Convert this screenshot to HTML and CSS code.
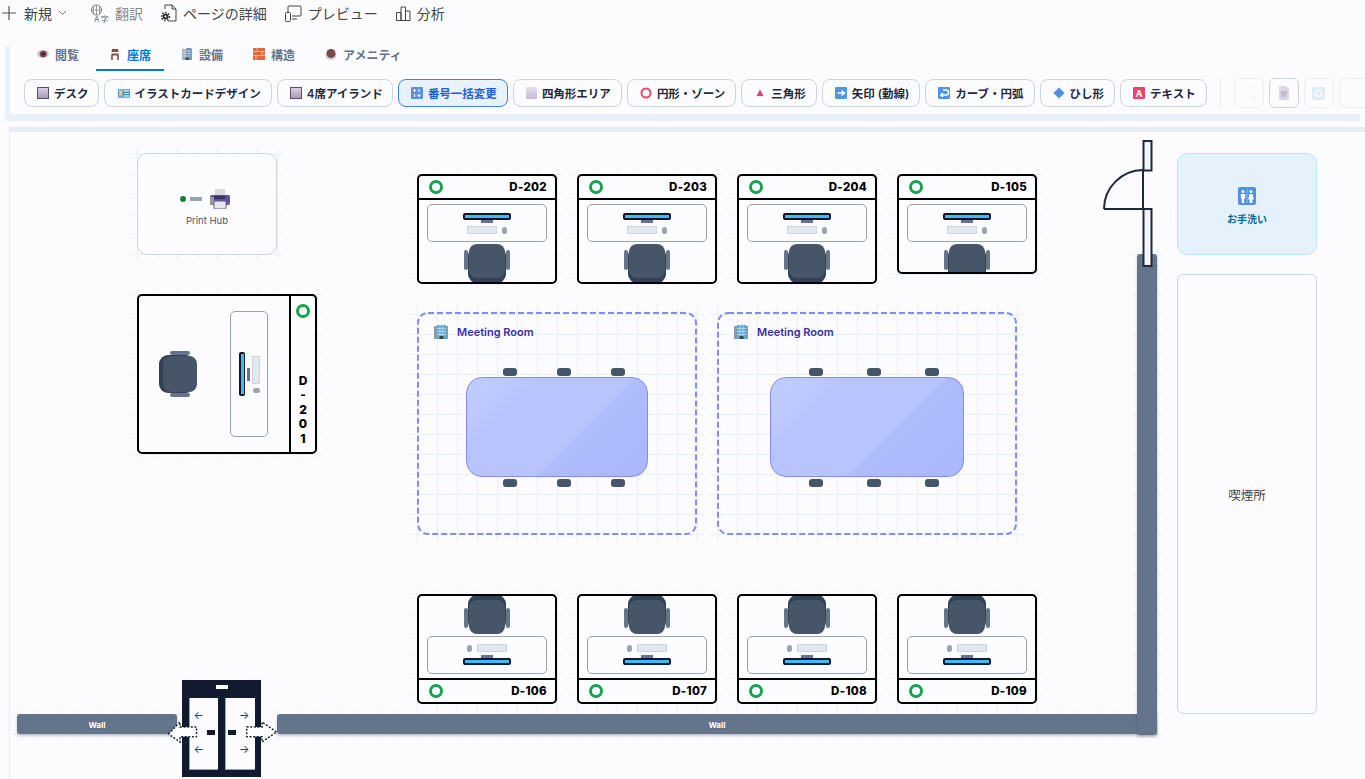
FILE: index.html
```html
<!DOCTYPE html>
<html lang="ja">
<head>
    <meta charset="UTF-8">
    <title>座席レイアウト</title>
    <link rel="stylesheet" href="styles.css">
</head>
<body>
    <!-- command bar -->
    <div class="cmdbar">
        <div class="cmd cmd-new">
            <svg class="ico-plus" width="14" height="14" viewBox="0 0 14 14"><path d="M7 0v14M0 7h14" stroke="#555" stroke-width="1.2" fill="none"/></svg>
            <span>新規</span>
            <svg width="9" height="6" viewBox="0 0 9 6"><path d="M1 1l3.5 3.5L8 1" stroke="#777" fill="none"/></svg>
        </div>
        <div class="cmd cmd-off cmd-translate">
            <svg width="19" height="19" viewBox="0 0 19 19"><circle cx="6.500" cy="6" r="5" fill="none" stroke="#777"/><path d="M1.500 6h10M6.500 1v10M3.500 2v8M9.500 2v8" stroke="#777" stroke-width=".7" fill="none"/><text x="4" y="18" class="ico-glyph">A</text><text x="10.500" y="18" class="ico-glyph">字</text></svg>
            <span>翻訳</span>
        </div>
        <div class="cmd cmd-details">
            <svg width="16" height="18" viewBox="0 0 16 18"><path d="M4 5V1h7l4 4v12H7" fill="none" stroke="#444"/><path d="M11 1v4h4" fill="none" stroke="#444"/><circle cx="4.500" cy="12.500" r="3" fill="#333"/><circle cx="4.500" cy="12.500" r="4" fill="none" stroke="#333" stroke-dasharray="1.500 1.500" stroke-width="1.500"/><circle cx="4.500" cy="12.500" r="1" fill="#fff"/></svg>
            <span>ページの詳細</span>
        </div>
        <div class="cmd cmd-preview">
            <svg width="17" height="17" viewBox="0 0 17 17"><path d="M3 7V2a1 1 0 0 1 1-1h11a1 1 0 0 1 1 1v8a1 1 0 0 1-1 1H7M7 14h5" fill="none" stroke="#444"/><rect x=".5" y="7.500" width="5" height="9" rx="1" fill="none" stroke="#444"/></svg>
            <span>プレビュー</span>
        </div>
        <div class="cmd cmd-chart">
            <svg width="15" height="15" viewBox="0 0 15 15"><path d="M.5 14.500v-8h4.500v8M5 14.500V1h4.500v13.500M9.500 14.500V5H14v9.500zM.5 14.500h13.500" fill="none" stroke="#444"/></svg>
            <span>分析</span>
        </div>
    </div>

    <!-- ribbon -->
    <div class="ribbon">
        <div class="tabs">
            <div class="tab">
                <svg class="tab-ico" viewBox="0 0 12 12"><ellipse cx="6" cy="6" rx="5.800" ry="4" fill="#cdbcc0"/><circle cx="6.300" cy="6" r="3.300" fill="#74434c"/><circle cx="6.300" cy="6" r="1.300" fill="#2b1b20"/></svg>
                <span>閲覧</span>
            </div>
            <div class="tab active">
                <svg class="tab-ico" viewBox="0 0 12 12"><path d="M3 1h6l.5 3h-7zM2.500 5.500h7v2h-7z" fill="#8c4a45"/><path d="M3 7v5M9 7v5" stroke="#6f3531" stroke-width="1.400"/></svg>
                <span>座席</span>
            </div>
            <div class="tab">
                <svg class="tab-ico" viewBox="0 0 12 12"><rect x="1" y="1" width="10" height="11" fill="#a3aebb"/><rect x="5.500" y="0" width="5" height="12" fill="#6f93b8"/><path d="M2 3h3M2 5.500h3M2 8h3M6.500 3h3M6.500 5.500h3M6.500 8h3" stroke="#cfe3f3"/><rect x="4.500" y="9.500" width="3" height="2.500" fill="#3b4a5a"/></svg>
                <span>設備</span>
            </div>
            <div class="tab">
                <svg class="tab-ico" viewBox="0 0 12 12"><rect width="12" height="12" fill="#e2673d"/><path d="M0 3.500h12M0 7.500h12M4 0v3.500M9 3.500v4M3 7.500v4.500" stroke="#f6b59b"/></svg>
                <span>構造</span>
            </div>
            <div class="tab">
                <svg class="tab-ico" viewBox="0 0 12 12"><ellipse cx="6" cy="7.500" rx="5.500" ry="4.500" fill="#d7cbe0"/><circle cx="6" cy="5.500" r="4.500" fill="#7a4a48"/></svg>
                <span>アメニティ</span>
            </div>
        </div>
        <div class="tools">
            <button class="tool tool-tight"><span class="ico-square"></span>デスク</button>
            <button class="tool tool-card">
                <svg class="tool-ico" viewBox="0 0 12 12"><rect y="2" width="12" height="9" fill="#5fb3e6"/><rect y="5" width="12" height="3" fill="#3d7fa8"/><rect x="1" y="3.500" width="3.500" height="5" fill="#e7c78f"/><path d="M6 4h5M6 6.500h5M6 9h5" stroke="#e6f4fb"/></svg>
                イラストカードデザイン
            </button>
            <button class="tool tool-tight"><span class="ico-square"></span>4席アイランド</button>
            <button class="tool tool-on">
                <svg class="tool-ico" viewBox="0 0 12 12"><rect width="12" height="12" rx="1" fill="#5b8fe0"/><path d="M3.500 2v3M8 2v3M3.500 7v3M8 7v3M2 3.500h3M6.500 8.500h3" stroke="#fff" stroke-width="1.100"/></svg>
                番号一括変更
            </button>
            <button class="tool"><span class="ico-area"></span>四角形エリア</button>
            <button class="tool">
                <svg class="tool-ico" viewBox="0 0 12 12"><circle cx="6" cy="6" r="4.500" fill="none" stroke="#f0436a" stroke-width="2"/></svg>
                円形・ゾーン
            </button>
            <button class="tool">
                <svg class="tool-ico" viewBox="0 0 12 12"><path d="M6 2.500l3.500 6.500h-7z" fill="#e03e72"/></svg>
                三角形
            </button>
            <button class="tool">
                <svg class="tool-ico" viewBox="0 0 12 12"><rect width="12" height="12" rx="1" fill="#4a97e8"/><path d="M2.500 6h6M6.500 3.500L9.500 6 6.500 8.500" stroke="#fff" stroke-width="1.500" fill="none"/></svg>
                矢印 (動線)
            </button>
            <button class="tool">
                <svg class="tool-ico" viewBox="0 0 12 12"><rect width="12" height="12" rx="1" fill="#4a97e8"/><path d="M5 3H8a2.300 2.300 0 0 1 0 5H3M5 6L2.800 8 5 10" stroke="#fff" stroke-width="1.400" fill="none"/></svg>
                カーブ・円弧
            </button>
            <button class="tool">
                <svg class="tool-ico" viewBox="0 0 12 12"><path d="M6 .5L11.500 6 6 11.500.5 6z" fill="#4a8fe0"/></svg>
                ひし形
            </button>
            <button class="tool"><span class="ico-text">A</span>テキスト</button>
            <div class="tool-sep"></div>
            <div class="mini">
                <svg width="12" height="14" viewBox="0 0 12 14"><path d="M7 1h4M11 9v4H8" fill="none" stroke="#f8efe3" stroke-width="1.500"/></svg>
            </div>
            <div class="mini mini-on">
                <svg width="12" height="14" viewBox="0 0 12 14"><path d="M1 0h7l3 3v11H1z" fill="#ddd6e8"/><path d="M3 6h6M3 8h6M3 10h4" stroke="#a99cbf"/></svg>
            </div>
            <div class="mini">
                <svg width="13" height="13" viewBox="0 0 13 13"><rect width="13" height="13" rx="2" fill="#dcecf8"/><circle cx="6.500" cy="6.500" r="3" fill="none" stroke="#fff" stroke-width="1.500"/></svg>
            </div>
            <div class="mini"></div>
        </div>
    </div>

    <!-- floor plan -->
    <div class="canvas">
        <div class="item hub">
            <div class="hub-box">
                <div class="hub-row">
                    <span class="hub-dot"></span>
                    <span class="hub-bar"></span>
                    <svg width="20" height="20" viewBox="0 0 20 20"><rect x="5" y="0" width="10" height="7" rx="1.500" fill="#d9d6e2"/><rect x="0" y="6" width="20" height="10" rx="2" fill="#5a4fa0"/><rect x="0" y="8" width="4" height="8" fill="#9a93a8"/><rect x="4" y="7" width="11" height="3" fill="#3a3560"/><rect x="4" y="12" width="12" height="8" rx="1" fill="#e8e6ef" stroke="#6a6090"/><rect x="18" y="13" width="1.500" height="1.500" fill="#e0407a"/></svg>
                </div>
                <div class="hub-label">Print Hub</div>
            </div>
        </div>

        <div class="item desk-side">
            <div class="side-box">
                <div class="side-body">
                    <div class="chair-side">
                        <span class="arm-h"></span>
                        <span class="seat-h"></span>
                        <span class="arm-h"></span>
                    </div>
                    <div class="card-v">
                        <span class="monitor-v"><i></i></span>
                        <span class="stand-v"></span>
                        <div class="kit-v">
                            <span class="keys-v"></span>
                            <span class="mouse-v"></span>
                        </div>
                    </div>
                </div>
                <div class="side-tag">
                    <span class="status"></span>
                    <div class="side-name">D-201</div>
                </div>
            </div>
        </div>

        <div class="item col-1 row-top">
            <div class="desk">
                <div class="desk-head"><span class="status"></span><b>D-202</b></div>
                <div class="desk-card"><span class="monitor"><i></i></span><span class="stand"></span><div class="kit"><span class="keys"></span><span class="mouse"></span></div></div>
                <div class="chair"><span class="arm"></span><span class="seat"></span><span class="arm"></span></div>
            </div>
        </div>
        <div class="item col-2 row-top">
            <div class="desk">
                <div class="desk-head"><span class="status"></span><b>D-203</b></div>
                <div class="desk-card"><span class="monitor"><i></i></span><span class="stand"></span><div class="kit"><span class="keys"></span><span class="mouse"></span></div></div>
                <div class="chair"><span class="arm"></span><span class="seat"></span><span class="arm"></span></div>
            </div>
        </div>
        <div class="item col-3 row-top">
            <div class="desk">
                <div class="desk-head"><span class="status"></span><b>D-204</b></div>
                <div class="desk-card"><span class="monitor"><i></i></span><span class="stand"></span><div class="kit"><span class="keys"></span><span class="mouse"></span></div></div>
                <div class="chair"><span class="arm"></span><span class="seat"></span><span class="arm"></span></div>
            </div>
        </div>
        <div class="item col-4 row-top">
            <div class="desk desk-short">
                <div class="desk-head"><span class="status"></span><b>D-105</b></div>
                <div class="desk-card"><span class="monitor"><i></i></span><span class="stand"></span><div class="kit"><span class="keys"></span><span class="mouse"></span></div></div>
                <div class="chair"><span class="arm"></span><span class="seat"></span><span class="arm"></span></div>
            </div>
        </div>

        <div class="item room room-1">
            <svg class="room-line" width="100%" height="100%"><rect/></svg>
            <div class="room-title">
                <svg width="14" height="14" viewBox="0 0 14 14"><rect y="1" width="14" height="13" fill="#8b9bab"/><rect x="3" y="0" width="9" height="14" fill="#5fa9d8"/><path d="M3 3.500h9M3 6.500h9M3 9.500h9M6 0v12M9 0v12" stroke="#b9e2f5" stroke-width=".8"/><rect x="5.500" y="11" width="4" height="3" fill="#3b4652"/></svg>
                <span>Meeting Room</span>
            </div>
            <div class="meet">
                <div class="meet-chairs"><span></span><span></span><span></span></div>
                <div class="meet-table"></div>
                <div class="meet-chairs"><span></span><span></span><span></span></div>
            </div>
        </div>
        <div class="item room room-2">
            <svg class="room-line" width="100%" height="100%"><rect/></svg>
            <div class="room-title">
                <svg width="14" height="14" viewBox="0 0 14 14"><rect y="1" width="14" height="13" fill="#8b9bab"/><rect x="3" y="0" width="9" height="14" fill="#5fa9d8"/><path d="M3 3.500h9M3 6.500h9M3 9.500h9M6 0v12M9 0v12" stroke="#b9e2f5" stroke-width=".8"/><rect x="5.500" y="11" width="4" height="3" fill="#3b4652"/></svg>
                <span>Meeting Room</span>
            </div>
            <div class="meet">
                <div class="meet-chairs"><span></span><span></span><span></span></div>
                <div class="meet-table"></div>
                <div class="meet-chairs"><span></span><span></span><span></span></div>
            </div>
        </div>

        <div class="item col-1 row-bottom">
            <div class="desk desk-flip">
                <div class="desk-head"><span class="status"></span><b>D-106</b></div>
                <div class="desk-card"><span class="monitor"><i></i></span><span class="stand"></span><div class="kit"><span class="keys"></span><span class="mouse"></span></div></div>
                <div class="chair"><span class="arm"></span><span class="seat"></span><span class="arm"></span></div>
            </div>
        </div>
        <div class="item col-2 row-bottom">
            <div class="desk desk-flip">
                <div class="desk-head"><span class="status"></span><b>D-107</b></div>
                <div class="desk-card"><span class="monitor"><i></i></span><span class="stand"></span><div class="kit"><span class="keys"></span><span class="mouse"></span></div></div>
                <div class="chair"><span class="arm"></span><span class="seat"></span><span class="arm"></span></div>
            </div>
        </div>
        <div class="item col-3 row-bottom">
            <div class="desk desk-flip">
                <div class="desk-head"><span class="status"></span><b>D-108</b></div>
                <div class="desk-card"><span class="monitor"><i></i></span><span class="stand"></span><div class="kit"><span class="keys"></span><span class="mouse"></span></div></div>
                <div class="chair"><span class="arm"></span><span class="seat"></span><span class="arm"></span></div>
            </div>
        </div>
        <div class="item col-4 row-bottom">
            <div class="desk desk-flip">
                <div class="desk-head"><span class="status"></span><b>D-109</b></div>
                <div class="desk-card"><span class="monitor"><i></i></span><span class="stand"></span><div class="kit"><span class="keys"></span><span class="mouse"></span></div></div>
                <div class="chair"><span class="arm"></span><span class="seat"></span><span class="arm"></span></div>
            </div>
        </div>

        <div class="item wall-left"><div class="wall">Wall</div></div>
        <div class="item wall-main"><div class="wall">Wall</div></div>
        <div class="item wall-up"><div class="wall"></div></div>

        <div class="item lift">
            <div class="lift-box">
                <div class="lift-head"><span></span></div>
                <div class="lift-doors">
                    <div class="lift-door">
                        <div class="lift-arrows"><span>←</span><span>←</span></div>
                        <span class="lift-handle"></span>
                    </div>
                    <div class="lift-door lift-door-r">
                        <div class="lift-arrows"><span>→</span><span>→</span></div>
                        <span class="lift-handle"></span>
                    </div>
                </div>
            </div>
        </div>
        <svg class="overlay lift-flow" width="112" height="24" viewBox="0 0 112 24">
            <path d="M.5 13L12 1V6H28.500V15.700H12V21z" fill="#fff" stroke="#1e293b" stroke-width="1.500" stroke-dasharray="2 1.600"/>
            <path d="M108.500 11L94 1V6H78.700V15.700H94V21z" fill="#fff" stroke="#1e293b" stroke-width="1.500" stroke-dasharray="2 1.600"/>
        </svg>

        <svg class="overlay door" width="56" height="132" viewBox="0 0 56 132">
            <rect x="43.500" y="3" width="8" height="29.500" fill="#f1f5f9" stroke="#1e293b" stroke-width="2"/>
            <rect x="43.500" y="71" width="8" height="57" fill="#f1f5f9" stroke="#1e293b" stroke-width="2"/>
            <path d="M43 32V71H4M43 32A39.500 39 0 0 0 4 71" fill="none" stroke="#1e293b" stroke-width="2"/>
        </svg>

        <div class="overlay restroom">
            <svg width="18" height="18" viewBox="0 0 18 18"><rect width="18" height="18" rx="2" fill="#4f8fe8"/><path d="M9 2v14" stroke="#a9c8f5" stroke-width=".7"/><circle cx="5" cy="4.500" r="1.500" fill="#fff"/><path d="M2.800 7h4.400v4.500H6.200V16H3.800v-4.500H2.800z" fill="#fff"/><circle cx="13" cy="4.500" r="1.500" fill="#fff"/><path d="M11.500 7h3l1.300 5.500h-1.500V16h-2.600v-3.500h-1.500z" fill="#fff"/></svg>
            <span>お手洗い</span>
        </div>
        <div class="overlay smoking">喫煙所</div>
    </div>
</body>
</html>
```

FILE: styles.css
```css
* {
    box-sizing: border-box;
}
html, body {
    height: 100%;
}
body {
    margin: 0;
    overflow: hidden;
    background: #fcfcff;
    color: #444;
    font-family: Inter, "Noto Sans CJK JP", sans-serif;
}
svg {
    display: block;
    flex: none;
}

/* command bar */
.cmdbar {
    display: flex;
    align-items: center;
    height: 26px;
    margin-bottom: 13px;
    font-size: 14px;
}
.cmd {
    display: flex;
    align-items: center;
    gap: 6px;
}
.cmd-new { margin-left: 2px; }
.ico-plus { margin-right: 2px; }
.cmd-off { color: #888; }
.cmd-translate { margin-left: 23px; }
.cmd-details { margin-left: 18px; }
.cmd-preview { margin-left: 18px; }
.cmd-chart { margin-left: 18px; }
.ico-glyph {
    fill: #666;
    font-size: 8px;
}

/* ribbon */
.ribbon {
    height: 75px;
    margin-left: 10px;
    padding-left: 14px;
    overflow: hidden;
    box-shadow: -5px 7px 0 #e8f0f8;
    clip-path: inset(0 0 -7px -5px);
}
.tabs {
    display: flex;
    gap: 4px;
    height: 32px;
}
.tab {
    display: flex;
    align-items: center;
    gap: 6px;
    padding: 0 13px;
    border-bottom: 2px solid transparent;
    color: #64748b;
    font-size: 12px;
    font-weight: 600;
}
.tab.active {
    color: #0078d4;
    border-bottom-color: #0078d4;
}
.tab-ico {
    width: 12px;
    height: 12px;
}
.tools {
    display: flex;
    align-items: center;
    gap: 5px;
    height: 30px;
    margin-top: 7px;
    width: 1400px;
}
.tool {
    display: flex;
    align-items: center;
    gap: 5px;
    height: 28px;
    padding: 0 10px 0 12px;
    border: 1px solid #cbd5e1;
    border-radius: 8px;
    background: #fcfcff;
    color: #1e293b;
    font-family: inherit;
    font-size: 11.500px;
    font-weight: 600;
    white-space: nowrap;
}
.tool-tight { padding-right: 9px; }
.tool-card { padding-left: 13px; }
.tool-on {
    background: #e8f2fc;
    border-color: #3b82f6;
    color: #1d5fd0;
}
.tool-ico {
    width: 12px;
    height: 12px;
}
.ico-square {
    width: 12px;
    height: 12px;
    border: 1px solid #57506a;
    background: linear-gradient(#d9cfe2, #a99bb8);
}
.ico-area {
    width: 11px;
    height: 12px;
    background: linear-gradient(#e6e0ee, #c9b9d8);
}
.ico-text {
    display: flex;
    align-items: center;
    justify-content: center;
    width: 12px;
    height: 12px;
    border-radius: 1px;
    background: #f0436a;
    color: #fff;
    font-size: 9px;
    font-weight: 700;
}
.tool-sep {
    width: 1px;
    height: 28px;
    margin: 0 8px;
    background: #e6eaf0;
}
.mini {
    display: flex;
    flex: none;
    align-items: center;
    justify-content: center;
    width: 30px;
    height: 30px;
    border: 1px solid #eceff4;
    border-radius: 6px;
}
.mini-on { border-color: #cbd5e1; }

/* floor plan */
.canvas {
    position: relative;
    height: 660px;
    margin: 13px 0 0 9px;
    border-top: 5px solid #e8ecf2;
    border-left: 1px solid #e8ecf2;
    overflow: hidden;
}
.item,
.overlay {
    position: absolute;
    z-index: 0;
}
.item::before {
    content: "";
    position: absolute;
    inset: -5px;
    z-index: -1;
    background-image:
        linear-gradient(#e8f1f7 1px, transparent 1px),
        linear-gradient(90deg, #e8f1f7 1px, transparent 1px);
    background-size: 20px 20px;
    background-position: 17px 14px;
    background-attachment: fixed;
}
.col-1 { left: 407px; }
.col-2 { left: 567px; }
.col-3 { left: 727px; }
.col-4 { left: 887px; }
.row-top { top: 42px; }
.row-bottom { top: 462px; }

/* print hub */
.hub {
    left: 127px;
    top: 21px;
}
.hub-box {
    display: flex;
    flex-direction: column;
    align-items: center;
    justify-content: center;
    gap: 6px;
    width: 140px;
    height: 102px;
    padding-top: 6px;
    border: 1px solid #cbd5e1;
    border-radius: 10px;
    background: #fcfcff;
}
.hub-row {
    display: flex;
    align-items: center;
    gap: 4px;
    margin-right: 4px;
}
.hub-dot {
    width: 6px;
    height: 6px;
    border-radius: 50%;
    background: #15803d;
}
.hub-bar {
    width: 12px;
    height: 4px;
    margin-right: 4px;
    background: #94a3b8;
}
.hub-label {
    color: #475569;
    font-size: 9.500px;
}

/* desks */
.desk {
    display: flex;
    flex-direction: column;
    width: 140px;
    height: 110px;
    border: 2px solid #000;
    border-radius: 5px;
    background: #fcfcff;
    overflow: hidden;
}
.desk-short { height: 100px; }
.desk-head {
    display: flex;
    flex: none;
    align-items: center;
    justify-content: space-between;
    height: 24px;
    padding: 0 8px 0 10px;
    border-bottom: 2px solid #000;
    color: #000;
    font-size: 11.500px;
    letter-spacing: .3px;
}
.desk-head b { font-weight: 800; }
.status {
    display: block;
    flex: none;
    width: 14px;
    height: 14px;
    border: 3px solid #16a34a;
    border-radius: 50%;
}
.desk-card {
    display: flex;
    flex: none;
    flex-direction: column;
    align-items: center;
    width: 120px;
    height: 38px;
    margin: 4px auto 0;
    padding-top: 8px;
    border: 1px solid #94a3b8;
    border-radius: 5px;
}
.monitor {
    display: block;
    flex: none;
    width: 48px;
    height: 7px;
    padding: 2px;
    border-radius: 2px;
    background: #0f172a;
}
.monitor i {
    display: block;
    height: 3px;
    background: #38bdf8;
}
.stand {
    flex: none;
    width: 12px;
    height: 3px;
    background: #64748b;
}
.kit {
    display: flex;
    flex: none;
    align-items: center;
    gap: 5px;
    margin-top: 3px;
}
.keys {
    width: 30px;
    height: 8px;
    border: 1px solid #cbd5e1;
    background: #e2e8f0;
}
.mouse {
    width: 5px;
    height: 7px;
    border-radius: 3px;
    background: #94a3b8;
}
.chair {
    display: flex;
    flex: none;
    align-items: flex-start;
    justify-content: center;
    gap: 1px;
    height: 38px;
    margin-top: 2px;
}
.arm {
    width: 4px;
    height: 20px;
    margin-top: 6px;
    border-radius: 2px;
    background: #64748b;
}
.seat {
    width: 36px;
    height: 34px;
    border-radius: 8px;
    background: #475569;
    box-shadow: 0 4px 0 1px #334155;
}

/* flipped desks, chair on top */
.desk-flip { flex-direction: column-reverse; }
.desk-flip .desk-head {
    border-bottom: 0;
    border-top: 2px solid #000;
}
.desk-flip .desk-card {
    flex-direction: column-reverse;
    margin: 0 auto 4px;
    padding: 0 0 8px;
}
.desk-flip .kit {
    flex-direction: row-reverse;
    margin: 0 0 3px;
}
.desk-flip .chair {
    align-items: flex-end;
    margin: 0 0 2px;
}
.desk-flip .arm { margin: 0 0 6px; }
.desk-flip .seat { box-shadow: 0 -4px 0 1px #334155; }

/* side desk */
.desk-side {
    left: 127px;
    top: 162px;
}
.side-box {
    display: flex;
    width: 180px;
    height: 160px;
    border: 2px solid #000;
    border-radius: 5px;
    background: #fcfcff;
    overflow: hidden;
}
.side-body {
    display: flex;
    flex: 1;
    align-items: center;
    padding-left: 24px;
}
.chair-side {
    display: flex;
    flex-direction: column;
    align-items: center;
    gap: 1px;
    width: 34px;
}
.arm-h {
    width: 20px;
    height: 4px;
    border-radius: 2px;
    background: #64748b;
}
.seat-h {
    width: 34px;
    height: 36px;
    border-radius: 8px;
    background: #475569;
    box-shadow: -3px 0 0 1px #334155;
}
.card-v {
    display: flex;
    align-items: center;
    width: 38px;
    height: 126px;
    margin-left: 33px;
    padding-left: 8px;
    border: 1px solid #94a3b8;
    border-radius: 5px;
}
.monitor-v {
    display: block;
    width: 6px;
    height: 44px;
    padding: 2px 1.500px;
    border-radius: 2px;
    background: #0f172a;
}
.monitor-v i {
    display: block;
    height: 100%;
    background: #38bdf8;
}
.stand-v {
    width: 3px;
    height: 13px;
    margin-left: 2px;
    background: #64748b;
}
.kit-v {
    display: flex;
    flex-direction: column;
    align-items: center;
    gap: 4px;
    margin-left: 2px;
}
.keys-v {
    width: 8px;
    height: 28px;
    border: 1px solid #cbd5e1;
    background: #e2e8f0;
}
.mouse-v {
    width: 7px;
    height: 5px;
    border-radius: 3px;
    background: #94a3b8;
}
.side-tag {
    display: flex;
    flex: none;
    flex-direction: column;
    align-items: center;
    width: 26px;
    padding: 8px 0 6px;
    border-left: 2px solid #000;
}
.side-name {
    width: 10px;
    margin-top: auto;
    color: #000;
    font-size: 12px;
    font-weight: 800;
    line-height: 14.500px;
    text-align: center;
    word-break: break-all;
}

/* meeting rooms */
.room {
    top: 180px;
    height: 223px;
    padding: 12px 17px 0;
}
.room::before { inset: -7px; }
.room-1 { left: 407px; width: 280px; }
.room-2 { left: 707px; width: 300px; }
.room-line {
    position: absolute;
    top: 0;
    left: 0;
}
.room-line rect {
    x: 1px;
    y: 1px;
    width: calc(100% - 2px);
    height: calc(100% - 2px);
    rx: 10px;
    fill: none;
    stroke: #818cf8;
    stroke-width: 2;
    stroke-dasharray: 6 3;
}
.room-title {
    display: flex;
    align-items: center;
    gap: 9px;
    height: 16px;
    color: #3730a3;
    font-size: 11px;
    font-weight: 600;
}
.meet {
    display: flex;
    flex-direction: column;
    gap: 1px;
    margin: 28px auto 0;
}
.room-1 .meet { width: 182px; }
.room-2 .meet { width: 194px; }
.meet-chairs {
    display: flex;
    height: 8px;
}
.meet-table + .meet-chairs { margin-top: 1px; }
.room-1 .meet-chairs { gap: 40px; padding-left: 37px; }
.room-2 .meet-chairs { gap: 44px; padding-left: 39px; }
.meet-chairs span {
    width: 14px;
    height: 8px;
    border-radius: 3px;
    background: #475569;
}
.meet-table {
    height: 100px;
    border: 1px solid #818cf8;
    border-radius: 16px;
    background: linear-gradient(135deg, #c1ccfe 0, #bcc8fd 20%, #b8c4fd 24%, #b8c4fd 59%, #aebbfd 62%, #aab8fc 100%);
}

/* walls */
.wall {
    display: flex;
    align-items: center;
    justify-content: center;
    height: 100%;
    padding-top: 1px;
    border-radius: 3px;
    background: #64748b;
    box-shadow: 0 2px 3px rgba(0, 0, 0, .2);
    color: #fff;
    font-size: 8px;
    font-weight: 800;
    text-shadow: 0 0 1px rgba(0, 0, 0, .5);
}
.wall-left { left: 7px; top: 582px; width: 160px; height: 20px; }
.wall-main { left: 267px; top: 582px; width: 880px; height: 20px; }
.wall-up { left: 1127px; top: 122px; width: 20px; height: 481px; }
.wall-up::before { bottom: 30px; }

/* elevator */
.lift {
    left: 172px;
    top: 548px;
}
.lift::before { display: none; }
.lift-box {
    width: 79px;
    height: 97px;
    padding: 0 6.500px 7px;
    background: #111a2e;
}
.lift-head {
    display: flex;
    align-items: center;
    justify-content: center;
    height: 18px;
}
.lift-head span {
    width: 12px;
    height: 4px;
    margin-top: -4px;
    background: #fff;
}
.lift-doors {
    display: flex;
    gap: 7px;
    height: 72px;
}
.lift-door {
    display: flex;
    flex: 1;
    align-items: center;
    justify-content: space-between;
    padding: 0 3px 4px 5px;
    background: #fcfcff;
    box-shadow: inset 1px -1px 0 #94a3b8;
}
.lift-door-r {
    flex-direction: row-reverse;
    padding: 0 5px 4px 3px;
}
.lift-arrows {
    display: flex;
    flex-direction: column;
    gap: 18px;
    color: #334155;
    font-size: 11px;
    line-height: 16px;
}
.lift-handle {
    width: 8px;
    height: 5px;
    background: #111a2e;
}
.lift-flow {
    left: 158px;
    top: 589px;
}
.door {
    left: 1090px;
    top: 6px;
}

/* rooms on the right */
.restroom {
    display: flex;
    flex-direction: column;
    align-items: center;
    justify-content: center;
    gap: 6px;
    left: 1167px;
    top: 21px;
    width: 140px;
    height: 102px;
    padding-top: 5px;
    border: 1px solid #bae6fd;
    border-radius: 10px;
    background: #e6f2fb;
    color: #0369a1;
    font-size: 10px;
    font-weight: 700;
}
.smoking {
    display: flex;
    align-items: center;
    justify-content: center;
    left: 1167px;
    top: 142px;
    width: 140px;
    height: 440px;
    border: 1px solid #cbd5e1;
    border-radius: 6px;
    color: #444;
    font-size: 12.500px;
}
```
